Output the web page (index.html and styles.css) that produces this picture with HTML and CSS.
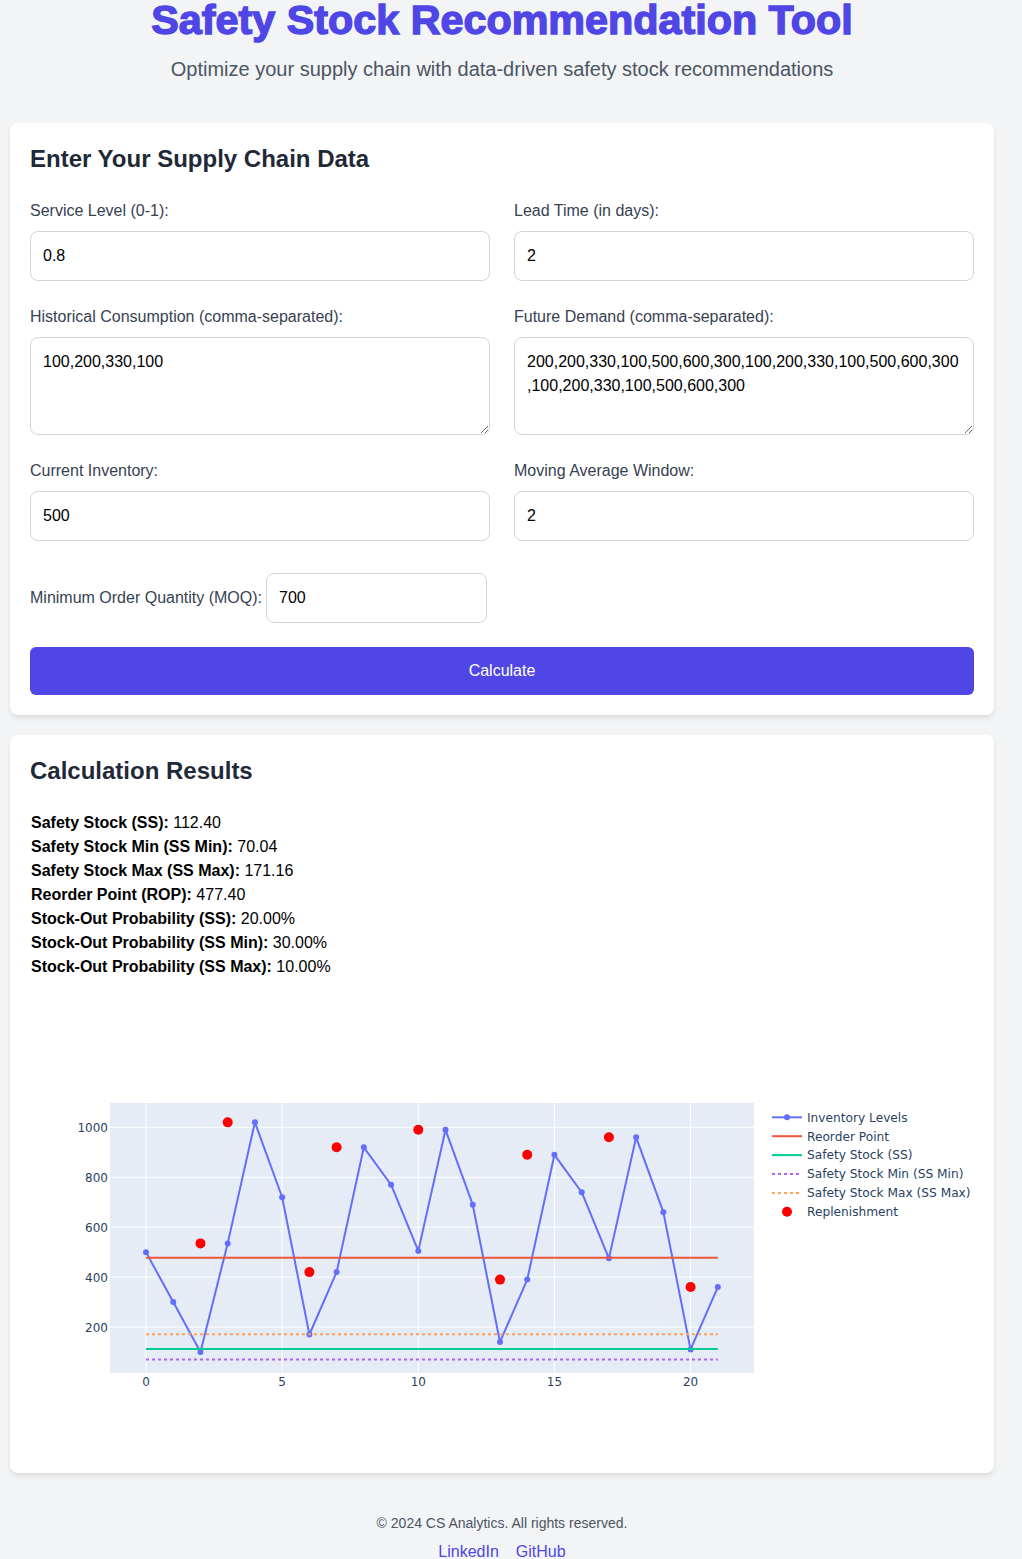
FILE: index.html
```html
<!DOCTYPE html>
<html lang="en">
<head>
<meta charset="utf-8">
<title>Safety Stock Recommendation Tool</title>
<link rel="stylesheet" href="styles.css">
</head>
<body>
<div class="page">
  <header class="hero">
    <h1 class="title">Safety Stock Recommendation Tool</h1>
    <p class="subtitle">Optimize your supply chain with data-driven safety stock recommendations</p>
  </header>

  <main class="main">
    <section class="card">
      <h2 class="card-title">Enter Your Supply Chain Data</h2>
      <form class="form">
        <div class="grid">
          <div class="field">
            <label class="label">Service Level (0-1):</label>
            <input class="input" type="text" value="0.8">
          </div>
          <div class="field">
            <label class="label">Lead Time (in days):</label>
            <input class="input" type="text" value="2">
          </div>
          <div class="field">
            <label class="label">Historical Consumption (comma-separated):</label>
            <textarea class="textarea" rows="3">100,200,330,100</textarea>
          </div>
          <div class="field">
            <label class="label">Future Demand (comma-separated):</label>
            <textarea class="textarea" rows="3">200,200,330,100,500,600,300,100,200,330,100,500,600,300,100,200,330,100,500,600,300</textarea>
          </div>
          <div class="field">
            <label class="label">Current Inventory:</label>
            <input class="input" type="text" value="500">
          </div>
          <div class="field">
            <label class="label">Moving Average Window:</label>
            <input class="input" type="text" value="2">
          </div>
        </div>
        <div class="moq">
          <label class="label label-inline">Minimum Order Quantity (MOQ):</label>
          <input class="input input-moq" type="text" value="700">
        </div>
        <button class="btn" type="button">Calculate</button>
      </form>
    </section>

    <section class="card">
      <h2 class="card-title">Calculation Results</h2>
      <div class="results">
        <p class="result"><strong>Safety Stock (SS):</strong> 112.40</p>
        <p class="result"><strong>Safety Stock Min (SS Min):</strong> 70.04</p>
        <p class="result"><strong>Safety Stock Max (SS Max):</strong> 171.16</p>
        <p class="result"><strong>Reorder Point (ROP):</strong> 477.40</p>
        <p class="result"><strong>Stock-Out Probability (SS):</strong> 20.00%</p>
        <p class="result"><strong>Stock-Out Probability (SS Min):</strong> 30.00%</p>
        <p class="result"><strong>Stock-Out Probability (SS Max):</strong> 10.00%</p>
      </div>
      <div class="chart-wrap">
        <svg class="chart" width="944" height="450" viewBox="0 0 944 450">
          <rect x="80" y="100" width="644" height="270" fill="#e5ecf6"/>
          <g stroke="#ffffff" stroke-width="1">
            <line x1="116" y1="100" x2="116" y2="370"/>
            <line x1="252.15" y1="100" x2="252.15" y2="370"/>
            <line x1="388.3" y1="100" x2="388.3" y2="370"/>
            <line x1="524.45" y1="100" x2="524.45" y2="370"/>
            <line x1="660.6" y1="100" x2="660.6" y2="370"/>
            <line x1="80" y1="124.33" x2="724" y2="124.33"/>
            <line x1="80" y1="174.25" x2="724" y2="174.25"/>
            <line x1="80" y1="224.17" x2="724" y2="224.17"/>
            <line x1="80" y1="274.09" x2="724" y2="274.09"/>
            <line x1="80" y1="324.01" x2="724" y2="324.01"/>
          </g>

          <g class="ticks" fill="#2a3f5f">
            <text x="78" y="129" text-anchor="end">1000</text>
            <text x="78" y="178.9" text-anchor="end">800</text>
            <text x="78" y="228.9" text-anchor="end">600</text>
            <text x="78" y="278.8" text-anchor="end">400</text>
            <text x="78" y="328.7" text-anchor="end">200</text>
            <text x="116" y="383" text-anchor="middle">0</text>
            <text x="252.15" y="383" text-anchor="middle">5</text>
            <text x="388.3" y="383" text-anchor="middle">10</text>
            <text x="524.45" y="383" text-anchor="middle">15</text>
            <text x="660.6" y="383" text-anchor="middle">20</text>
          </g>

          <polyline fill="none" stroke="#636efa" stroke-width="2" stroke-linejoin="round"
            points="116,249.13 143.23,299.05 170.46,348.97 197.69,240.39 224.92,119.34 252.15,194.22 279.38,331.5 306.61,269.1 333.84,144.3 361.07,181.74 388.3,247.88 415.53,126.83 442.76,201.71 469.99,338.99 497.22,276.59 524.45,151.79 551.68,189.23 578.91,255.37 606.14,134.31 633.37,209.19 660.6,346.47 687.83,284.07"/>
          <g fill="#636efa">
            <circle cx="116" cy="249.13" r="3"/>
            <circle cx="143.23" cy="299.05" r="3"/>
            <circle cx="170.46" cy="348.97" r="3"/>
            <circle cx="197.69" cy="240.39" r="3"/>
            <circle cx="224.92" cy="119.34" r="3"/>
            <circle cx="252.15" cy="194.22" r="3"/>
            <circle cx="279.38" cy="331.5" r="3"/>
            <circle cx="306.61" cy="269.1" r="3"/>
            <circle cx="333.84" cy="144.3" r="3"/>
            <circle cx="361.07" cy="181.74" r="3"/>
            <circle cx="388.3" cy="247.88" r="3"/>
            <circle cx="415.53" cy="126.83" r="3"/>
            <circle cx="442.76" cy="201.71" r="3"/>
            <circle cx="469.99" cy="338.99" r="3"/>
            <circle cx="497.22" cy="276.59" r="3"/>
            <circle cx="524.45" cy="151.79" r="3"/>
            <circle cx="551.68" cy="189.23" r="3"/>
            <circle cx="578.91" cy="255.37" r="3"/>
            <circle cx="606.14" cy="134.31" r="3"/>
            <circle cx="633.37" cy="209.19" r="3"/>
            <circle cx="660.6" cy="346.47" r="3"/>
            <circle cx="687.83" cy="284.07" r="3"/>
          </g>

          <line x1="116" y1="254.77" x2="687.83" y2="254.77" stroke="#ef553b" stroke-width="2"/>
          <line x1="116" y1="345.88" x2="687.83" y2="345.88" stroke="#00cc96" stroke-width="2"/>
          <line x1="116" y1="356.45" x2="687.83" y2="356.45" stroke="#ab63fa" stroke-width="2" stroke-dasharray="3,3"/>
          <line x1="116" y1="331.21" x2="687.83" y2="331.21" stroke="#ffa15a" stroke-width="2" stroke-dasharray="3,3"/>

          <g fill="#ff0000">
            <circle cx="170.46" cy="240.39" r="5"/>
            <circle cx="197.69" cy="119.34" r="5"/>
            <circle cx="279.38" cy="269.1" r="5"/>
            <circle cx="306.61" cy="144.3" r="5"/>
            <circle cx="388.3" cy="126.83" r="5"/>
            <circle cx="469.99" cy="276.59" r="5"/>
            <circle cx="497.22" cy="151.79" r="5"/>
            <circle cx="578.91" cy="134.31" r="5"/>
            <circle cx="660.6" cy="284.07" r="5"/>
          </g>

          <g class="legend">
            <line x1="742" y1="114.3" x2="772" y2="114.3" stroke="#636efa" stroke-width="2"/>
            <circle cx="757" cy="114.3" r="3" fill="#636efa"/>
            <text x="777" y="118.6" fill="#2a3f5f">Inventory Levels</text>
            <line x1="742" y1="133.2" x2="772" y2="133.2" stroke="#ef553b" stroke-width="2"/>
            <text x="777" y="137.5" fill="#2a3f5f">Reorder Point</text>
            <line x1="742" y1="152.1" x2="772" y2="152.1" stroke="#00cc96" stroke-width="2"/>
            <text x="777" y="156.4" fill="#2a3f5f">Safety Stock (SS)</text>
            <line x1="742" y1="171" x2="772" y2="171" stroke="#ab63fa" stroke-width="2" stroke-dasharray="3,3"/>
            <text x="777" y="175.3" fill="#2a3f5f">Safety Stock Min (SS Min)</text>
            <line x1="742" y1="189.9" x2="772" y2="189.9" stroke="#ffa15a" stroke-width="2" stroke-dasharray="3,3"/>
            <text x="777" y="194.2" fill="#2a3f5f">Safety Stock Max (SS Max)</text>
            <circle cx="757" cy="208.8" r="5" fill="#ff0000"/>
            <text x="777" y="213.1" fill="#2a3f5f">Replenishment</text>
          </g>
        </svg>
      </div>
    </section>
  </main>

  <footer class="footer">
    <p class="copyright">© 2024 CS Analytics. All rights reserved.</p>
    <nav class="links">
      <a class="link" href="#">LinkedIn</a>
      <a class="link" href="#">GitHub</a>
    </nav>
  </footer>
</div>
</body>
</html>
```

FILE: styles.css
```css
* {
  box-sizing: border-box;
}

html, body {
  margin: 0;
  padding: 0;
  background: #f3f4f6;
}

body {
  font-family: "Liberation Sans", Arial, sans-serif;
  color: #1f2937;
}

.page {
  width: 1004px;
  padding-bottom: 24px;
}

.hero {
  text-align: center;
  margin-bottom: 40px;
}

.title {
  margin: 0 0 15px;
  font-size: 41.3px;
  line-height: 40px;
  font-weight: 700;
  color: #4f46e5;
  -webkit-text-stroke: 1.4px #4f46e5;
}

.subtitle {
  margin: 0;
  font-size: 20px;
  line-height: 28px;
  color: #4b5563;
}

.main {
  display: flex;
  flex-direction: column;
  gap: 20px;
  margin: 0 10px;
}

.card {
  background: #ffffff;
  border-radius: 8px;
  padding: 20px;
  box-shadow: 0 4px 6px -1px rgba(0, 0, 0, 0.08), 0 2px 4px -1px rgba(0, 0, 0, 0.05);
}

.card-title {
  margin: 0 0 24px;
  font-size: 24px;
  line-height: 32px;
  font-weight: 700;
  color: #1f2937;
}

.grid {
  display: grid;
  grid-template-columns: 1fr 1fr;
  gap: 24px;
}

.field {
  display: flex;
  flex-direction: column;
}

.label {
  display: block;
  margin-bottom: 8px;
  font-size: 16px;
  line-height: 24px;
  color: #374151;
}

.input,
.textarea {
  display: block;
  width: 100%;
  padding: 12px;
  border: 1px solid #d1d5db;
  border-radius: 8px;
  background: #ffffff;
  font-family: "Liberation Sans", Arial, sans-serif;
  font-size: 16px;
  line-height: 24px;
  color: #000000;
  outline: none;
}

.input {
  height: 50px;
}

.textarea {
  height: 98px;
  resize: vertical;
}

.moq {
  display: flex;
  align-items: center;
  gap: 4px;
  margin-top: 32px;
}

.label-inline {
  margin-bottom: 0;
}

.input-moq {
  width: 221px;
}

.btn {
  display: block;
  width: 100%;
  height: 48px;
  margin-top: 24px;
  border: none;
  border-radius: 6px;
  background: #4f46e5;
  color: #ffffff;
  font-family: "Liberation Sans", Arial, sans-serif;
  font-size: 16px;
  line-height: 24px;
  cursor: pointer;
}

.results {
  margin-bottom: 24px;
  padding-left: 1px;
}

.result {
  margin: 0;
  font-size: 16px;
  line-height: 24px;
  color: #000000;
}

.result strong {
  font-weight: 700;
}

.chart-wrap {
  width: 944px;
  height: 450px;
}

.chart {
  display: block;
  font-family: "DejaVu Sans", Verdana, sans-serif;
  font-size: 12px;
}

.legend text {
  font-size: 12.2px;
}

.footer {
  margin-top: 40px;
  text-align: center;
}

.copyright {
  margin: 0;
  font-size: 14px;
  line-height: 20px;
  color: #4b5563;
}

.links {
  margin-top: 7px;
  display: flex;
  justify-content: center;
  gap: 17px;
}

.link {
  font-size: 16px;
  line-height: 24px;
  color: #4f46e5;
  text-decoration: none;
}
```
